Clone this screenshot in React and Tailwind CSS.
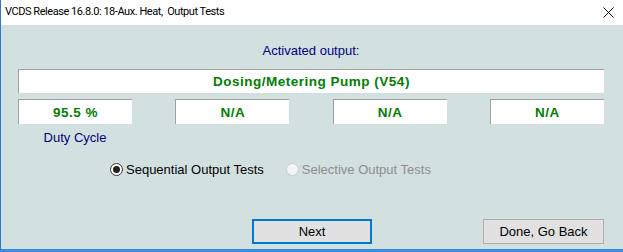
import React from 'react';

const readings = ["95.5 %", "N/A", "N/A", "N/A"];

const Field = ({ children, className = "" }) => (
    <div className={`bg-white border-t border-l border-[#a0a0a0] flex items-center justify-center text-[#008000] font-bold text-[13.5px] tracking-[0.5px] ${className}`}>
        {children}
    </div>
);

const Radio = ({ checked, disabled, label }) => (
    <label className={`flex items-center gap-[3px] ${disabled ? "text-[#8d8d8d]" : "text-black"}`}>
        <span className={`w-[13px] h-[13px] rounded-full border flex items-center justify-center ${disabled ? "border-[#cccccc] bg-[#f4f4f4]" : "border-[#333333] bg-white"}`}>
            {checked && <span className="w-[7px] h-[7px] rounded-full bg-[#222222]" />}
        </span>
        <span>{label}</span>
    </label>
);

const App = () => {
    return (
        <div className="w-[623px] h-[252px] flex flex-col bg-white overflow-hidden" style={{ fontFamily: '"Liberation Sans", Arial, sans-serif' }}>
            {/* title bar */}
            <div className="h-[25px] flex items-center justify-between pl-[4px] pr-[9px] border-l border-[#2b79d0]">
                <span className="text-[11px] text-black whitespace-pre tracking-[-0.45px]" style={{ fontFamily: 'Roboto, sans-serif' }}>
                    VCDS Release 16.8.0: 18-Aux. Heat,  Output Tests
                </span>
                <svg width="11" height="11" viewBox="0 0 11 11">
                    <path d="M0.5 0.5 L10.5 10.5 M10.5 0.5 L0.5 10.5" stroke="#111" strokeWidth="1" />
                </svg>
            </div>

            {/* body */}
            <div className="flex-1 flex flex-col bg-[#d3e0e0] border-l border-[#2b79d0] border-b-[3px] border-b-[#3a8ee0] pl-[17px] pr-[19px] text-[13px] leading-[15px]">
                <div className="pt-[18px] text-center text-[#000080]">Activated output:</div>

                <Field className="mt-[11px] h-[24px]">Dosing/Metering Pump (V54)</Field>

                <div className="mt-[6px] flex justify-between">
                    {readings.map((r, i) => (
                        <Field key={i} className="w-[114px] h-[25px]">{r}</Field>
                    ))}
                </div>

                <div className="w-[114px] mt-[6px] text-center text-[#000080]">Duty Cycle</div>

                <div className="mt-[17px] ml-[92px] flex items-center gap-[22px]">
                    <Radio checked label="Sequential Output Tests" />
                    <Radio disabled label="Selective Output Tests" />
                </div>

                <div className="mt-[42px] flex">
                    <button className="ml-[234px] w-[120px] h-[25px] bg-[#e1e1e1] border-2 border-[#0078d7] text-black">
                        Next
                    </button>
                    <button className="ml-auto w-[121px] h-[25px] bg-[#e1e1e1] border border-[#adadad] text-black">
                        Done, Go Back
                    </button>
                </div>
            </div>
        </div>
    );
};

export default App;
